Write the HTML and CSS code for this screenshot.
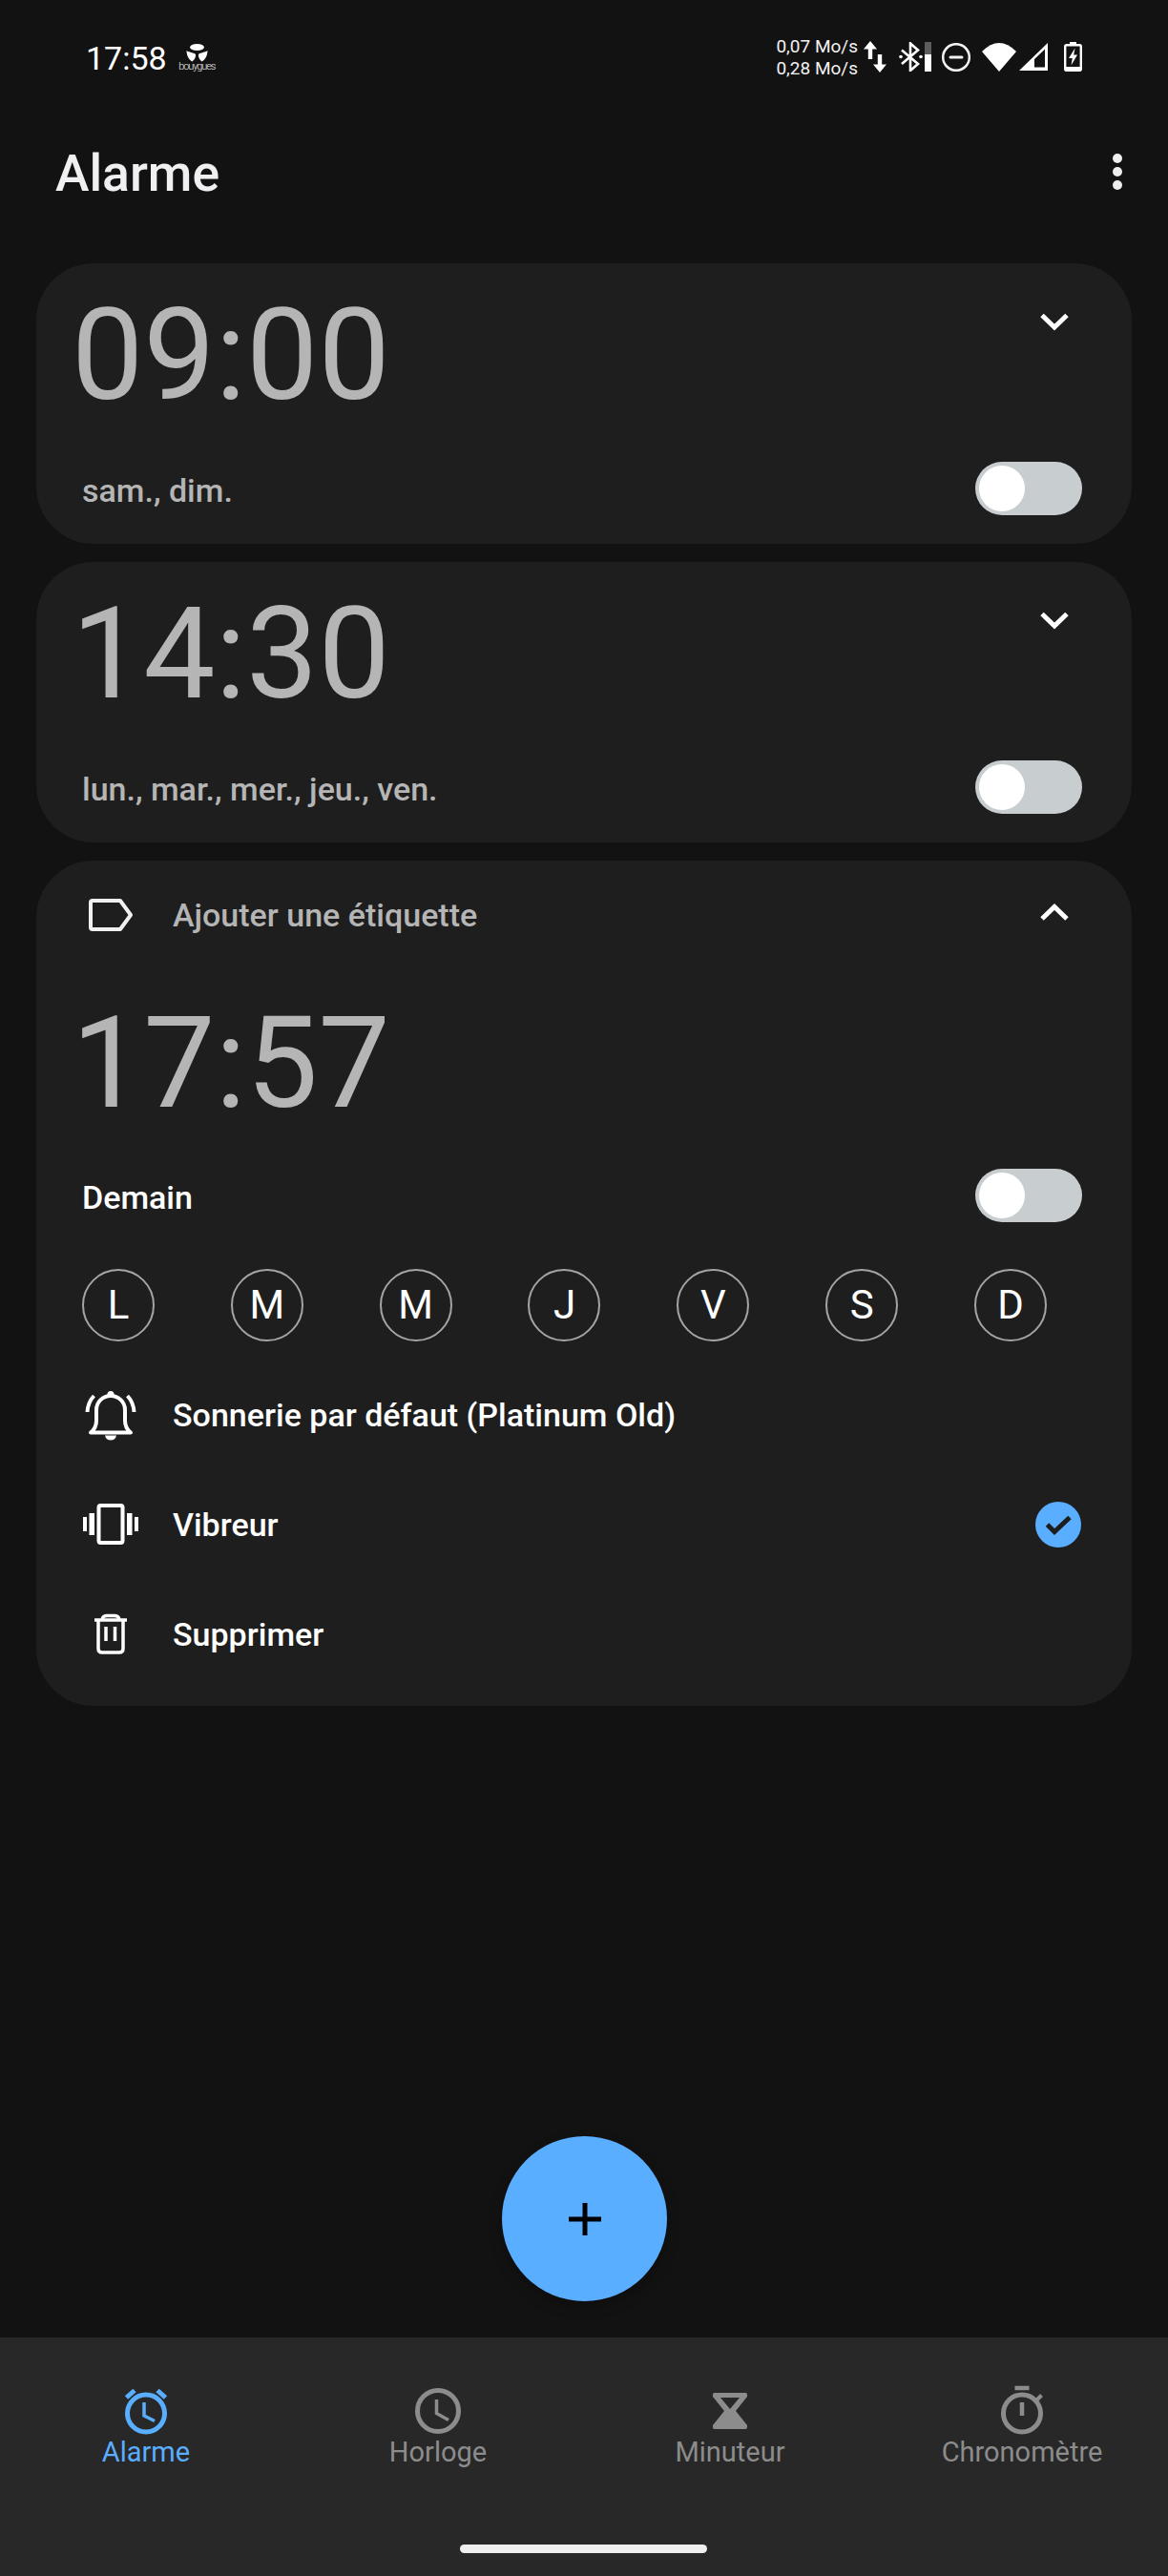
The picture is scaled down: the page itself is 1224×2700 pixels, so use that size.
FILE: index.html
```html
<!DOCTYPE html>
<html lang="fr">
<head>
<meta charset="utf-8">
<title>Alarme</title>
<link rel="stylesheet" href="styles.css">
</head>
<body>
<div class="screen">
  <header class="status">
    <div class="status-left">
      <span class="clock">17:58</span>
      <div class="carrier">
        <svg class="carrier-mark" width="23" height="19" viewBox="0 0 23 19"><ellipse cx="11.5" cy="3.5" rx="7.5" ry="3.5" fill="#fff"/><path d="M.5 7C3 9 8 9 10 11C10.500 14 8.500 17 6.500 18.500C3 17 .5 12 .5 7Z" fill="#fff"/><path d="M22.500 7C20 9 15 9 13 11C12.500 14 14.500 17 16.500 18.500C20 17 22.500 12 22.500 7Z" fill="#fff"/></svg>
        <span class="carrier-name">bouygues</span>
      </div>
    </div>
    <div class="status-right">
      <div class="speed"><span>0,07 Mo/s</span><span>0,28 Mo/s</span></div>
      <svg class="ic-arrows" width="24" height="33" viewBox="0 0 24 33" fill="#fff"><path d="M7 0L14 8.500H9.200V19H4.800V8.500H0Z"/><path d="M17 33L10 24.500H14.800V14H19.200V24.500H24Z"/></svg>
      <svg class="ic-bt" width="35" height="31" viewBox="0 0 35 31"><path d="M3 8.500L20 23L12 30V1.500L20 8.500L3 23" fill="none" stroke="#fff" stroke-width="2.600"/><circle cx="2" cy="15.500" r="1.800" fill="#fff"/><circle cx="23" cy="15.500" r="1.800" fill="#fff"/><rect x="27" y="0" width="7" height="13" fill="#5c5c5c"/><rect x="27" y="13" width="7" height="18" fill="#fff"/></svg>
      <svg class="ic-dnd" width="30" height="30" viewBox="0 0 30 30"><circle cx="15" cy="15" r="13.800" fill="none" stroke="#f2f2f2" stroke-width="2.500"/><rect x="7.500" y="13.500" width="15" height="3" rx="1.500" fill="#f2f2f2"/></svg>
      <svg class="ic-wifi" width="36" height="30" viewBox="0 0 36 30"><path d="M18 30L0 9Q18-9 36 9Z" fill="#fff"/></svg>
      <svg class="ic-signal" width="30" height="29" viewBox="0 0 30 29"><path fill-rule="evenodd" d="M0 29L30 0V29ZM16 25.500H27V6.500L16 17Z" fill="#fff"/></svg>
      <svg class="ic-batt" width="19" height="31" viewBox="0 0 19 31"><rect x="6" y="0" width="7" height="4" fill="#fff"/><rect x="1.200" y="3.200" width="16.600" height="26.500" rx="1.500" fill="none" stroke="#fff" stroke-width="2.400"/><rect x="1" y="26" width="17" height="4.500" fill="#fff"/><path d="M11.500 6.500L5 17H8.800L7.500 24.500L14 13.500H10.200Z" fill="#fff"/></svg>
    </div>
  </header>

  <div class="titlebar">
    <h1 class="title">Alarme</h1>
    <svg class="menu" width="20" height="60" viewBox="0 0 20 60" fill="#eee"><circle cx="10" cy="14" r="5"/><circle cx="10" cy="28" r="5"/><circle cx="10" cy="42" r="5"/></svg>
  </div>

  <main class="main">
    <section class="card">
      <div class="time-row">
        <span class="time">09:00</span>
        <svg class="chev" width="58" height="40" viewBox="0 0 58 40"><path d="M16 13.500L29 26L42 13.500" fill="none" stroke="#fff" stroke-width="5"/></svg>
      </div>
      <div class="sum-row">
        <span class="days-text">sam., dim.</span>
        <div class="toggle"><span class="knob"></span></div>
      </div>
    </section>

    <section class="card">
      <div class="time-row">
        <span class="time">14:30</span>
        <svg class="chev" width="58" height="40" viewBox="0 0 58 40"><path d="M16 13.500L29 26L42 13.500" fill="none" stroke="#fff" stroke-width="5"/></svg>
      </div>
      <div class="sum-row">
        <span class="days-text">lun., mar., mer., jeu., ven.</span>
        <div class="toggle"><span class="knob"></span></div>
      </div>
    </section>

    <section class="card card-open">
      <div class="label-row">
        <span class="ico"><svg width="60" height="60" viewBox="0 0 60 60"><path d="M11 15H40L51 30L40 45H11Q9 45 9 43V17Q9 15 11 15Z" fill="none" stroke="#f0f0f2" stroke-width="4" stroke-linejoin="round"/></svg></span>
        <span class="label-text">Ajouter une étiquette</span>
        <svg class="chev-up" width="58" height="40" viewBox="0 0 58 40"><path d="M16 26L29 13.500L42 26" fill="none" stroke="#fff" stroke-width="5"/></svg>
      </div>
      <div class="time-open"><span class="time">17:57</span></div>
      <div class="sum-row sum-open">
        <span class="demain">Demain</span>
        <div class="toggle"><span class="knob"></span></div>
      </div>
      <div class="week">
        <span class="day">L</span><span class="day">M</span><span class="day">M</span><span class="day">J</span><span class="day">V</span><span class="day">S</span><span class="day">D</span>
      </div>
      <div class="opt">
        <span class="ico"><svg width="60" height="60" viewBox="0 0 60 60"><path d="M9 48.500Q15 44 15 36V25C15 16 22 10 30 10C38 10 45 16 45 25V36Q45 44 51 48.500Z" fill="none" stroke="#fff" stroke-width="4" stroke-linejoin="round"/><circle cx="30" cy="8.500" r="3.500" fill="#fff"/><path d="M24 51.500H36Q35 56.500 30 56.500Q25 56.500 24 51.500Z" fill="#fff"/><path d="M5.500 27Q6 17 12.500 10M54.500 27Q54 17 47.500 10" fill="none" stroke="#fff" stroke-width="4"/></svg></span>
        <span class="opt-text">Sonnerie par défaut (Platinum Old)</span>
      </div>
      <div class="opt">
        <span class="ico"><svg width="60" height="60" viewBox="0 0 60 60" fill="#fff"><rect x="17.500" y="10" width="25" height="39" rx="2" fill="none" stroke="#fff" stroke-width="4"/><rect x="1" y="22" width="4" height="15"/><rect x="7.500" y="18" width="5.500" height="23"/><rect x="47" y="18" width="5.500" height="23"/><rect x="55" y="22" width="4" height="15"/></svg></span>
        <span class="opt-text">Vibreur</span>
        <svg class="check" width="48" height="48" viewBox="0 0 48 48"><circle cx="24" cy="24" r="24" fill="#5aaeff"/><path d="M12.500 24L20 31.500L36 16.500" fill="none" stroke="#1e1e1e" stroke-width="5"/></svg>
      </div>
      <div class="opt">
        <span class="ico"><svg width="60" height="60" viewBox="0 0 60 60" fill="none" stroke="#fff" stroke-width="3.500"><path d="M13 15H47"/><path d="M17 15V45Q17 49 21 49H39Q43 49 43 45V15"/><path d="M21 14Q22 10.500 26 10.500H34Q38 10.500 39 14"/><path d="M25 22V37M34.500 22V37"/></svg></span>
        <span class="opt-text">Supprimer</span>
      </div>
    </section>

    <button class="fab" type="button"><svg width="34" height="34" viewBox="0 0 34 34"><path d="M0 17H34M17 0V34" stroke="#000" stroke-width="5"/></svg></button>
  </main>

  <nav class="nav">
    <div class="tab tab-on">
      <svg width="60" height="56" viewBox="0 0 60 56" fill="none" stroke="currentColor"><circle cx="30" cy="33.500" r="19.500" stroke-width="5"/><path d="M28 22V36L39 41.500" stroke-width="3.500"/><path d="M9.500 17L18 9.500M50.500 17L42 9.500" stroke-width="5"/></svg>
      <span>Alarme</span>
    </div>
    <div class="tab">
      <svg width="60" height="56" viewBox="0 0 60 56" fill="none" stroke="currentColor"><circle cx="30" cy="31" r="21.500" stroke-width="5"/><path d="M28.500 19V33.500L41 40.500" stroke-width="3.500"/></svg>
      <span>Horloge</span>
    </div>
    <div class="tab">
      <svg width="60" height="56" viewBox="0 0 60 56" fill="currentColor"><path fill-rule="evenodd" d="M13.500 12H46.500Q48 12 48 14V16L36 31L48 46V48Q48 50 46.500 50H13.500Q12 50 12 48V46L24 31L12 16V14Q12 12 13.500 12ZM20 17L30 29L40 17Z"/></svg>
      <span>Minuteur</span>
    </div>
    <div class="tab">
      <svg width="60" height="56" viewBox="0 0 60 56" fill="none" stroke="currentColor"><circle cx="30" cy="33.500" r="19.500" stroke-width="5"/><path d="M22.500 7H37.500" stroke-width="4.500"/><path d="M30 22V36" stroke-width="4.500"/><path d="M45 20L50.500 14.500" stroke-width="4"/></svg>
      <span>Chronomètre</span>
    </div>
    <div class="home"></div>
  </nav>
</div>
</body>
</html>
```
FILE: styles.css
```css
* { box-sizing: border-box; }
html, body { margin: 0; padding: 0; background: #121212; }
body { font-family: Roboto, "Noto Sans", sans-serif; color: #fff; }
.screen { width: 1224px; height: 2700px; display: flex; flex-direction: column; overflow: hidden; }

.status { height: 119px; flex: none; display: flex; align-items: center; justify-content: space-between; padding: 0 90px 0 90px; }
.status-left { display: flex; align-items: center; gap: 13px; }
.clock { font-size: 34px; line-height: 40px; padding-top: 2px; font-weight: 450; color: #fff; }
.carrier { display: flex; flex-direction: column; align-items: center; width: 37px; }
.carrier-mark { display: block; }
.carrier-name { font-size: 11px; line-height: 9px; font-weight: 300; letter-spacing: -1.1px; color: #e8e8e8; }
.status-right { display: flex; align-items: center; }
.speed { display: flex; flex-direction: column; align-items: flex-end; font-size: 19px; line-height: 23px; color: #f2f2f2; }
.ic-arrows { margin-left: 6px; }
.ic-bt { margin-left: 13px; }
.ic-dnd { margin-left: 10px; }
.ic-wifi { margin-left: 12px; }
.ic-signal { margin-left: 3px; }
.ic-batt { margin-left: 17px; }
.status-right svg { display: block; flex: none; }

.titlebar { flex: none; height: 93px; padding: 33px 43px 0 58px; display: flex; align-items: flex-start; justify-content: space-between; }
.title { margin: 0; font-size: 53.5px; line-height: 60px; font-weight: 480; color: #f0f0f2; }
.menu { display: block; }

.main { flex: 1; position: relative; padding: 64px 38px 0; display: flex; flex-direction: column; gap: 19px; }
.card { background: #1e1e1e; border-radius: 60px; padding: 29px 0 30px; }
.time-row { display: flex; justify-content: space-between; align-items: flex-start; padding: 0 52px 0 37px; }
.time { font-size: 134px; line-height: 136px; font-weight: 380; color: #b5b5b5; display: block; }
.chev { margin-top: 12px; flex: none; display: block; }
.sum-row { display: flex; align-items: center; justify-content: space-between; margin-top: 43px; padding: 0 52px 0 48px; }
.days-text { font-size: 34px; line-height: 40px; padding-top: 3px; font-weight: 500; color: #b5b5b5; }
.toggle { width: 112px; height: 56px; border-radius: 28px; background: #c8cdcf; padding: 4px; flex: none; }
.knob { display: block; width: 48px; height: 48px; border-radius: 50%; background: #fff; }

.card-open { padding: 27px 0 18px; }
.label-row { display: flex; align-items: center; height: 60px; padding: 0 52px 0 48px; gap: 35px; }
.ico { width: 60px; height: 60px; flex: none; display: block; }
.ico svg { display: block; }
.label-text { flex: 1; font-size: 34px; line-height: 40px; font-weight: 500; color: #b5b5b5; }
.chev-up { display: block; flex: none; margin-bottom: 4px; margin-left: -35px; }
.time-open { margin-top: 58px; padding-left: 37px; }
.sum-open { margin-top: 42px; }
.demain { font-size: 34px; line-height: 40px; padding-top: 3px; font-weight: 500; color: #fff; }
.week { display: flex; justify-content: space-between; margin-top: 49px; margin-bottom: 19px; padding: 0 89px 0 48px; }
.day { width: 76px; height: 76px; border-radius: 50%; border: 2px solid #a3a3a8; display: flex; align-items: center; justify-content: center; font-size: 42px; line-height: 1; font-weight: 400; color: #fff; }
.opt { display: flex; align-items: center; height: 115px; padding: 0 53px 0 48px; gap: 35px; }
.opt-text { flex: 1; font-size: 34px; line-height: 40px; font-weight: 500; color: #fff; }
.check { display: block; flex: none; }

.fab { position: absolute; left: 526px; top: 2027px; width: 173px; height: 173px; border: 0; padding: 0; border-radius: 50%; background: #5aaeff; display: flex; align-items: center; justify-content: center; box-shadow: 0 6px 14px rgba(0,0,0,.25); }
.fab svg { display: block; }

.nav { flex: none; position: relative; height: 250px; background: #282828; display: grid; grid-template-columns: repeat(4, 306px); align-content: start; padding-top: 46px; }
.tab { display: flex; flex-direction: column; align-items: center; color: #8c8c8c; }
.tab svg { display: block; }
.tab span { font-size: 29px; line-height: 36px; }
.tab-on { color: #5aaeff; }
.home { position: absolute; left: 482px; bottom: 24px; width: 259px; height: 9px; border-radius: 5px; background: #efefef; }
```
